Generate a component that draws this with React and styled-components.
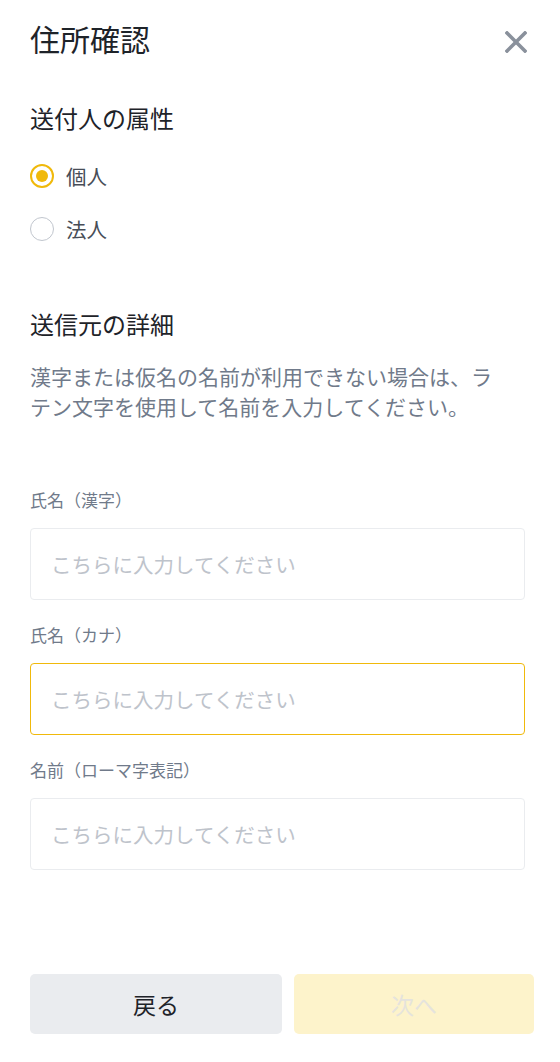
import React, { useState } from "react";
import styled, { createGlobalStyle } from "styled-components";

const GlobalStyle = createGlobalStyle`
  * { box-sizing: border-box; }
  html, body {
    margin: 0;
    padding: 0;
    background: #ffffff;
    font-family: "Noto Sans CJK JP", "Noto Sans", sans-serif;
  }
`;

const Page = styled.div`
  min-height: 100vh;
  display: flex;
  flex-direction: column;
  padding: 18px 26px 28px 30px;
`;

const Header = styled.div`
  display: flex;
  align-items: flex-start;
  justify-content: space-between;
  padding-right: 7px;
`;

const Title = styled.h1`
  margin: 0;
  font-size: 30px;
  line-height: 40px;
  font-weight: 400;
  color: #1e2329;
`;

const CloseButton = styled.button`
  border: none;
  background: none;
  padding: 0;
  margin-top: 13px;
  width: 22px;
  height: 22px;
  display: flex;
  cursor: pointer;
`;

const SectionTitle = styled.h2`
  margin: ${(p) => p.$top}px 0 0;
  font-size: 24px;
  line-height: 32px;
  font-weight: 400;
  color: #1e2329;
`;

const RadioGroup = styled.div`
  display: flex;
  flex-direction: column;
  gap: 21.5px;
  margin-top: 25.5px;
`;

const RadioRow = styled.label`
  display: flex;
  align-items: center;
  gap: 12px;
  height: 32px;
  cursor: pointer;
`;

const RadioCircle = styled.span`
  width: 24px;
  height: 24px;
  border-radius: 50%;
  border: ${(p) => (p.$checked ? "2px solid #f0b90b" : "1.5px solid #c1c6ce")};
  display: flex;
  align-items: center;
  justify-content: center;
  &::after {
    content: "";
    width: 12px;
    height: 12px;
    border-radius: 50%;
    background: #f0b90b;
    display: ${(p) => (p.$checked ? "block" : "none")};
  }
`;

const RadioText = styled.span`
  font-size: 20.5px;
  line-height: 32px;
  color: #474d57;
`;

const Description = styled.p`
  margin: 21px 0 0;
  max-width: 478px;
  font-size: 21px;
  line-height: 30px;
  color: #707a8a;
  line-break: anywhere;
`;

const Fields = styled.div`
  display: flex;
  flex-direction: column;
  gap: 23px;
  margin-top: 66.5px;
  padding-right: 9px;
`;

const Field = styled.div`
  display: flex;
  flex-direction: column;
  gap: 16px;
`;

const FieldLabel = styled.label`
  font-size: 17px;
  line-height: 24px;
  color: #707a8a;
`;

const TextInput = styled.input`
  width: 100%;
  height: 72px;
  padding: 0 20px;
  border-radius: 4px;
  border: 1px solid ${(p) => (p.$focused ? "#f0b90b" : "#eaecef")};
  font-family: inherit;
  font-size: 20.5px;
  color: #1e2329;
  background: #ffffff;
  outline: none;
  &::placeholder {
    color: #bec3cb;
  }
`;

const Footer = styled.div`
  margin-top: auto;
  display: flex;
  gap: 12px;
`;

const Button = styled.button`
  height: 60px;
  border: none;
  border-radius: 5px;
  font-family: inherit;
  font-size: 23px;
  flex: 0 0 ${(p) => p.$width}px;
  background: ${(p) => (p.$primary ? "#fdf3cb" : "#eaecef")};
  color: ${(p) => (p.$primary ? "#e5e3dd" : "#1e2329")};
  cursor: ${(p) => (p.$primary ? "default" : "pointer")};
`;

const fields = [
  { label: "氏名（漢字）" },
  { label: "氏名（カナ）", focused: true },
  { label: "名前（ローマ字表記）" },
];

const CloseIcon = () => (
  <svg width="22" height="22" viewBox="0 0 22 22">
    <path
      d="M2 2 L20 20 M20 2 L2 20"
      stroke="#8a919c"
      strokeWidth="3.6"
      strokeLinecap="square"
      fill="none"
    />
  </svg>
);

const App = () => {
  const [type, setType] = useState("individual");

  return (
    <>
      <GlobalStyle />
      <Page>
        <Header>
          <Title>住所確認</Title>
          <CloseButton aria-label="close">
            <CloseIcon />
          </CloseButton>
        </Header>

        <SectionTitle $top={44}>送付人の属性</SectionTitle>
        <RadioGroup>
          <RadioRow onClick={() => setType("individual")}>
            <RadioCircle $checked={type === "individual"} />
            <RadioText>個人</RadioText>
          </RadioRow>
          <RadioRow onClick={() => setType("corporate")}>
            <RadioCircle $checked={type === "corporate"} />
            <RadioText>法人</RadioText>
          </RadioRow>
        </RadioGroup>

        <SectionTitle $top={63}>送信元の詳細</SectionTitle>
        <Description>
          漢字または仮名の名前が利用できない場合は、ラテン文字を使用して名前を入力してください。
        </Description>

        <Fields>
          {fields.map((f, i) => (
            <Field key={i}>
              <FieldLabel>{f.label}</FieldLabel>
              <TextInput
                $focused={f.focused}
                placeholder="こちらに入力してください"
              />
            </Field>
          ))}
        </Fields>

        <Footer>
          <Button $width={252}>戻る</Button>
          <Button $width={240} $primary disabled>
            次へ
          </Button>
        </Footer>
      </Page>
    </>
  );
};

export default App;
